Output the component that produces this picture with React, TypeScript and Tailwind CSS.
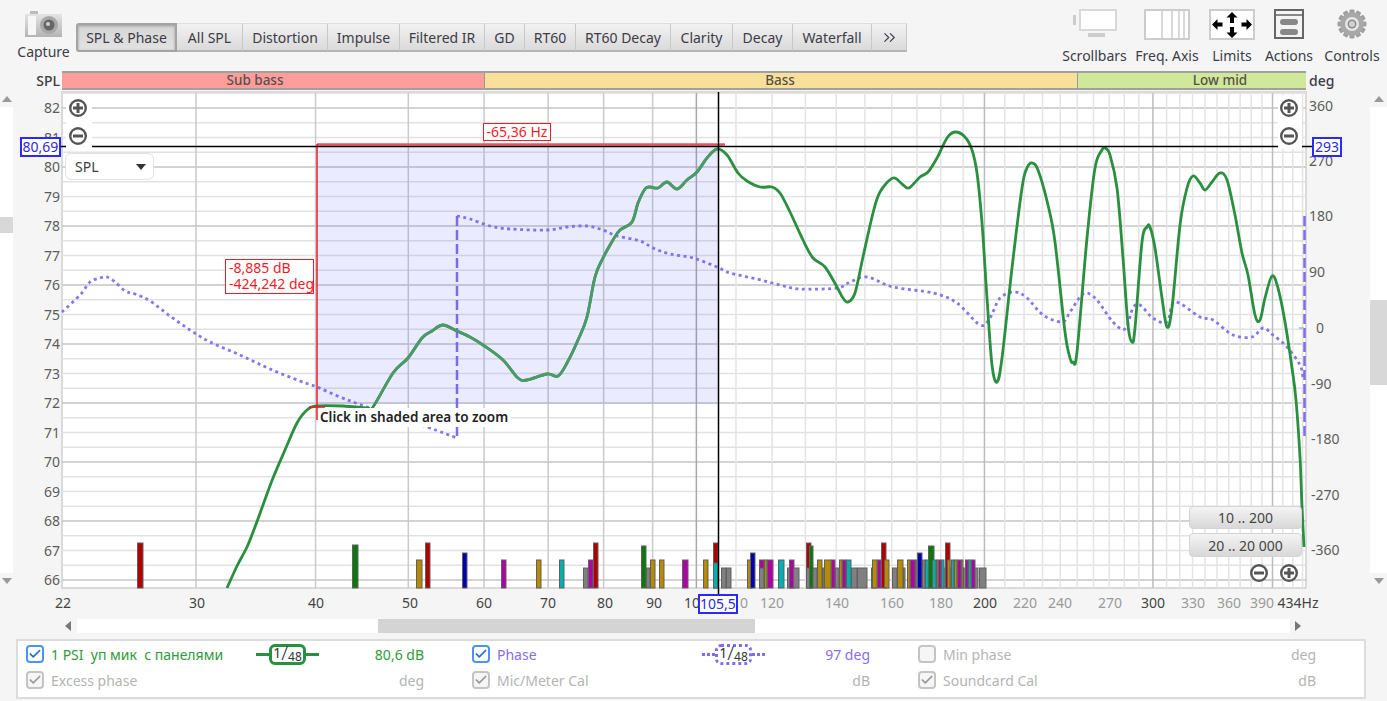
import React from 'react';
import { Check, ChevronsRight } from 'lucide-react';

type Pt = [number, number];

// frequency axis is log, fitted from the tick positions on the screen
const fx = (f: number) => 196 + 415.6 * Math.log(f / 30);
const dbY = (db: number) => 108 + (82 - db) * 29.5;

const splCurve: Pt[] = [
  [227, 588], [237, 566], [247, 547], [255, 527], [263, 505], [273, 478], [285, 450], [297, 423], [307, 410], [317, 406],
  [343, 406], [367, 408], [373, 407], [393, 373], [408, 358], [422, 338], [432, 331], [443, 325], [457, 331], [470, 337],
  [483, 345], [503, 360], [518, 378], [527, 380], [547, 374], [558, 376], [567, 363], [578, 340], [587, 317], [595, 277],
  [603, 258], [613, 240], [620, 230], [632, 222], [638, 203], [645, 189], [650, 187], [658, 188], [667, 182], [677, 189],
  [687, 180], [697, 172], [707, 158], [717, 149], [727, 155], [738, 173], [747, 181], [760, 187], [772, 187], [780, 193],
  [790, 212], [803, 240], [813, 258], [825, 267], [837, 287], [843, 298], [848, 302], [855, 293], [863, 257], [873, 213],
  [880, 192], [893, 178], [902, 184], [909, 188], [920, 177], [928, 172], [937, 158], [947, 138], [955, 132], [965, 137],
  [972, 150], [977, 173], [982, 223], [987, 298], [992, 365], [997, 382], [1002, 358], [1012, 268], [1022, 188], [1027, 168],
  [1032, 163], [1038, 170], [1048, 205], [1055, 242], [1065, 332], [1070, 358], [1073, 362], [1077, 352], [1087, 238], [1095, 168],
  [1102, 150], [1105, 148], [1110, 155], [1117, 188], [1123, 258], [1128, 325], [1132, 342], [1135, 328], [1142, 242], [1147, 227],
  [1150, 227], [1155, 248], [1162, 298], [1167, 327], [1172, 308], [1180, 225], [1187, 188], [1193, 176], [1200, 183], [1205, 190],
  [1212, 182], [1220, 173], [1227, 180], [1235, 215], [1242, 253], [1248, 275], [1255, 315], [1260, 320], [1265, 298], [1272, 276],
  [1278, 288], [1285, 322], [1292, 368], [1296, 400], [1300, 457], [1302, 507], [1304, 547],
];

const phaseA: Pt[] = [
  [62, 312], [80, 295], [90, 282], [100, 278], [107, 277], [115, 282], [125, 291], [135, 294], [150, 301], [170, 316], [190, 330],
  [210, 342], [240, 355], [270, 369], [300, 381], [317, 387], [340, 397], [367, 407], [427, 427], [457, 438],
];

const phaseB: Pt[] = [
  [457, 216], [470, 219], [490, 226], [510, 229], [547, 230], [567, 227], [587, 226], [603, 230], [617, 236], [640, 241], [653, 248],
  [670, 254], [693, 258], [717, 267], [730, 273], [757, 279], [780, 285], [800, 289], [837, 288], [850, 282], [867, 277], [893, 287],
  [933, 293], [957, 303], [980, 325], [990, 318], [1000, 298], [1015, 292], [1027, 298], [1043, 315], [1062, 322], [1070, 312],
  [1080, 297], [1087, 293], [1097, 300], [1113, 322], [1125, 329], [1133, 308], [1140, 305], [1153, 318], [1167, 322], [1175, 302],
  [1200, 317], [1213, 320], [1233, 335], [1252, 337], [1263, 328], [1273, 335], [1287, 347], [1300, 365], [1303, 378],
];

// catmull-rom through the traced points
function smooth(pts: Pt[]) {
  let d = `M${pts[0][0]} ${pts[0][1]}`;
  for (let i = 0; i < pts.length - 1; i++) {
    const p0 = pts[Math.max(i - 1, 0)];
    const p1 = pts[i];
    const p2 = pts[i + 1];
    const p3 = pts[Math.min(i + 2, pts.length - 1)];
    const c1x = p1[0] + (p2[0] - p0[0]) / 6;
    const c1y = p1[1] + (p2[1] - p0[1]) / 6;
    const c2x = p2[0] - (p3[0] - p1[0]) / 6;
    const c2y = p2[1] - (p3[1] - p1[1]) / 6;
    d += ` C${c1x.toFixed(1)} ${c1y.toFixed(1)} ${c2x.toFixed(1)} ${c2y.toFixed(1)} ${p2[0]} ${p2[1]}`;
  }
  return d;
}

const R = '#b00000';
const G = '#0a780a';
const B = '#0000b0';
const O = '#b88a00';
const M = '#b000a8';
const C = '#00b0b0';
const K = '#808080';

const bars: [number, number, number, string][] = [
  [137, 143, 543, R], [352, 358, 545, G], [416, 422, 560, O], [425, 430, 543, R], [462, 467, 553, B], [501, 506, 560, M],
  [536, 541, 560, O], [559, 564, 560, C], [583, 588, 568, K], [588, 593, 560, M], [593, 598, 543, R], [641, 646, 546, G],
  [646, 650, 568, K], [650, 655, 560, O], [659, 664, 560, O], [682, 688, 560, M], [703, 708, 560, O], [713, 718, 543, R],
  [713, 718, 563, C], [721, 726, 568, K], [726, 731, 568, K], [747, 752, 560, O], [750, 755, 553, B], [759, 764, 560, M],
  [759, 764, 568, K], [764, 767, 560, O], [767, 773, 560, M], [778, 784, 560, C], [787, 793, 568, K], [789, 794, 560, M],
  [793, 799, 568, K], [806, 811, 543, R], [806, 817, 568, K], [809, 813, 546, G], [817, 822, 560, O], [822, 824, 568, K],
  [824, 831, 560, O], [831, 835, 560, M], [835, 839, 568, K], [839, 842, 560, O], [842, 846, 560, M], [846, 851, 560, C],
  [851, 857, 568, K], [857, 867, 568, K], [871, 876, 568, K], [872, 877, 560, O], [877, 881, 560, M], [881, 886, 543, R],
  [884, 889, 560, O], [892, 897, 568, K], [897, 903, 560, O], [903, 905, 568, K], [907, 910, 560, O], [910, 915, 560, M],
  [915, 917, 560, K], [917, 922, 553, B], [922, 963, 568, K], [922, 925, 560, K], [925, 929, 560, C], [928, 934, 546, G],
  [932, 936, 560, C], [936, 938, 560, O], [938, 941, 560, M], [941, 944, 560, C], [945, 950, 543, R], [947, 950, 560, O],
  [951, 954, 560, C], [954, 957, 560, O], [957, 961, 560, M], [961, 963, 560, O], [963, 978, 568, K], [965, 968, 560, M],
  [968, 971, 560, C], [971, 975, 560, M], [979, 986, 568, K],
];

const minorDb = Array.from({ length: 34 }, (_, i) => 82.5 - i * 0.5);

const xLabels: [string, number, boolean][] = [
  ['22', 63, true], ['30', 197, true], ['40', 316, true], ['50', 410, true], ['60', 484, true], ['70', 548, true], ['80', 605, true],
  ['90', 654, true], ['100', 696, true], ['110', 736, false], ['120', 772, false], ['140', 837, false], ['160', 892, false],
  ['180', 941, false], ['200', 985, true], ['220', 1025, false], ['240', 1060, false], ['270', 1110, false], ['300', 1153, true],
  ['330', 1193, false], ['360', 1229, false], ['390', 1262, false], ['434Hz', 1298, true],
];

const degLabels: [string, number][] = [
  ['360', 106], ['270', 161], ['180', 216], ['90', 272], ['0', 328], ['-90', 384], ['-180', 439], ['-270', 495], ['-360', 550],
];

const tabs: { label: React.ReactNode; cls: string; active?: boolean }[] = [
  { label: 'SPL & Phase', cls: 'w-[101px]', active: true },
  { label: 'All SPL', cls: 'w-[66px]' },
  { label: 'Distortion', cls: 'w-[85px]' },
  { label: 'Impulse', cls: 'w-[72px]' },
  { label: 'Filtered IR', cls: 'w-[85px]' },
  { label: 'GD', cls: 'w-[40px]' },
  { label: 'RT60', cls: 'w-[51px]' },
  { label: 'RT60 Decay', cls: 'w-[95px]' },
  { label: 'Clarity', cls: 'w-[62px]' },
  { label: 'Decay', cls: 'w-[60px]' },
  { label: 'Waterfall', cls: 'w-[79px]' },
  { label: <ChevronsRight size={19} strokeWidth={1.4} />, cls: 'w-[35px]' },
];

function ZoomBtn({ x, y, plus }: { x: number; y: number; plus?: boolean }) {
  return (
    <g>
      <circle cx={x} cy={y} r={7.8} fill="white" stroke="#555" strokeWidth={2.4} />
      <rect x={x - 5} y={y - 1.5} width={10} height={3} fill="#555" />
      {plus && <rect x={x - 1.5} y={y - 5} width={3} height={10} fill="#555" />}
    </g>
  );
}

function CameraIcon() {
  return (
    <svg width="40" height="28" viewBox="0 0 40 28" className="mt-[10px]">
      <defs>
        <linearGradient id="cam" x1="0" y1="0" x2="0" y2="1">
          <stop offset="0" stopColor="#e4e4e4" />
          <stop offset="1" stopColor="#b4b4b4" />
        </linearGradient>
      </defs>
      <rect x="6" y="1" width="8" height="4" fill="#bbb" />
      <rect x="1" y="4" width="37" height="23" fill="url(#cam)" />
      <rect x="4" y="6" width="8" height="19" fill="#f6f6f6" />
      <circle cx="25" cy="15" r="9" fill="#a8a8a8" />
      <circle cx="25" cy="15" r="5.5" fill="#666" />
      <circle cx="24" cy="14" r="2" fill="#cfcfd8" />
    </svg>
  );
}

function ScrollbarsIcon() {
  return (
    <svg width="44" height="30" viewBox="0 0 44 30">
      <rect x="7" y="1" width="36" height="20" fill="#fff" stroke="#d8d8d8" strokeWidth="2" />
      <rect x="0" y="6" width="3" height="10" fill="#ccc" />
      <rect x="15" y="24" width="17" height="4" fill="#ccc" />
    </svg>
  );
}

function FreqIcon() {
  return (
    <svg width="46" height="31" viewBox="0 0 46 31">
      <rect x="1" y="1" width="44" height="29" fill="#fff" stroke="#ccc" strokeWidth="2" />
      {[18, 28, 35, 40].map((x) => (
        <line key={x} x1={x} y1="1" x2={x} y2="30" stroke="#ccc" strokeWidth="1.5" />
      ))}
    </svg>
  );
}

function LimitsIcon() {
  return (
    <svg width="46" height="31" viewBox="0 0 46 31">
      <rect x="1" y="1" width="44" height="29" fill="#fff" stroke="#ccc" strokeWidth="2" />
      <path d="M23 3l-5.500 5.500h3.500v5.500h4v-5.500h3.500zM23 29l-5.500-5.500h3.500v-5.500h4v5.500h3.500zM3 15.500l5.500-5.500v3.500h5v4h-5v3.500zM43 15.500l-5.500-5.500v3.500h-5v4h5v3.500z" fill="#000" />
    </svg>
  );
}

function ActionsIcon() {
  return (
    <svg width="30" height="30" viewBox="0 0 30 30">
      <rect x="1" y="1" width="28" height="28" fill="#f4f4f4" stroke="#666" strokeWidth="2" />
      <line x1="1" y1="6" x2="29" y2="6" stroke="#666" strokeWidth="1.5" />
      <rect x="6" y="10" width="18" height="6" rx="3" fill="#888" />
      <rect x="6" y="20" width="18" height="6" rx="3" fill="#888" />
    </svg>
  );
}

function GearIcon() {
  const teeth = Array.from({ length: 12 }, (_, i) => i * 30);
  return (
    <svg width="30" height="30" viewBox="0 0 30 30">
      {teeth.map((a) => (
        <rect key={a} x="12.500" y="0.500" width="5" height="6" rx="1" fill="#a0a0a0" transform={`rotate(${a} 15 15)`} />
      ))}
      <circle cx="15" cy="15" r="11.500" fill="#a8a8a8" />
      <circle cx="15" cy="15" r="7" fill="#e8e8e8" />
      <circle cx="15" cy="15" r="4.500" fill="#8c8c8c" />
      <circle cx="15" cy="15" r="3" fill="#d0d0d0" />
    </svg>
  );
}

const tools = [
  { label: 'Scrollbars', cls: 'w-[73px]', icon: <ScrollbarsIcon /> },
  { label: 'Freq. Axis', cls: 'w-[72px]', icon: <FreqIcon /> },
  { label: 'Limits', cls: 'w-[58px]', icon: <LimitsIcon /> },
  { label: 'Actions', cls: 'w-[56px]', icon: <ActionsIcon /> },
  { label: 'Controls', cls: 'w-[70px]', icon: <GearIcon /> },
];

function CheckBox({ state }: { state: 'on' | 'dim' | 'off' }) {
  if (state === 'on') {
    return (
      <span className="w-[18px] h-[18px] rounded-[4px] border-2 border-[#4a94f0] bg-white flex items-center justify-center">
        <Check size={14} strokeWidth={3} color="#1d6fd8" />
      </span>
    );
  }
  return (
    <span className="w-[18px] h-[18px] rounded-[4px] border-2 border-[#c4c4c4] bg-[#f6f6f6] flex items-center justify-center">
      {state === 'dim' && <Check size={14} strokeWidth={3} color="#999" />}
    </span>
  );
}

function Smoothing({ dotted }: { dotted?: boolean }) {
  const lineCls = dotted
    ? 'w-[13px] border-t-[3px] border-dotted border-[#7f6cf0]'
    : 'w-[13px] border-t-[3px] border-[#2a8f3e]';
  const boxCls = dotted
    ? 'border-[3px] border-dotted border-[#7f6cf0] rounded-[6px]'
    : 'border-[3px] border-[#2a8f3e] rounded-[6px]';
  return (
    <div className="flex items-center">
      <span className={lineCls} />
      <span className={`${boxCls} w-[37px] h-[21px] flex items-center justify-center text-[#333] leading-none`}>
        <span className="text-[14px] -translate-y-[1px]">1</span>
        <span className="text-[20px] font-light -translate-y-[1px]">/</span>
        <span className="text-[12px] translate-y-[3px]">48</span>
      </span>
      <span className={lineCls} />
    </div>
  );
}

function LegendCell({
  state,
  label,
  value,
  color,
  smoothing,
}: {
  state: 'on' | 'dim' | 'off';
  label: string;
  value: string;
  color: string;
  smoothing?: React.ReactNode;
}) {
  return (
    <div className={`w-[446px] h-[26px] grid grid-cols-[25px_205px_63px_105px] items-center ${color}`}>
      <CheckBox state={state} />
      <span className="whitespace-pre">{label}</span>
      <span>{smoothing}</span>
      <span className="text-right">{value}</span>
    </div>
  );
}

function Plot() {
  const hz: number[] = [];
  for (let f = 110; f <= 430; f += 10) hz.push(f);
  const splPath = smooth(splCurve);
  return (
    <svg width="1357" height="529" viewBox="13 90 1357 529" className="block">
      <defs>
        <clipPath id="shade">
          <rect x="317" y="146" width="401" height="258" />
        </clipPath>
      </defs>
      <rect x="62" y="92" width="1244" height="496" fill="#fff" stroke="#d0d0d0" strokeWidth="1.500" />

      {/* grid */}
      {minorDb.map((db) => (
        <line key={db} x1="62" x2="1306" y1={dbY(db)} y2={dbY(db)} stroke={db % 2 === 0 ? '#c4c4c4' : '#e2e2e2'} strokeWidth={1.5} />
      ))}
      {hz.map((f) => (
        <line key={f} x1={fx(f)} x2={fx(f)} y1="93" y2="588" stroke={f === 200 || f === 300 || f === 400 ? '#bcbcbc' : '#e4e4e4'} strokeWidth={1.5} />
      ))}
      {[30, 40, 50, 60, 70, 80, 90].map((f) => (
        <line key={f} x1={fx(f)} x2={fx(f)} y1="93" y2="588" stroke="#cacaca" strokeWidth={1.5} />
      ))}
      <line x1={fx(100)} x2={fx(100)} y1="93" y2="588" stroke="#a8a8a8" strokeWidth={1.5} />

      {/* distortion / marker bars */}
      {bars.map(([a, b, top, c], i) => (
        <rect key={i} x={a + 0.5} y={top} width={b - a - 0.5} height={588 - top} fill={c} stroke="#606060" strokeWidth={1} />
      ))}

      {/* curves */}
      <path d={smooth(phaseA)} fill="none" stroke="#8577ee" strokeWidth={2.8} strokeDasharray="3 3.500" />
      <path d={smooth(phaseB)} fill="none" stroke="#8577ee" strokeWidth={2.8} strokeDasharray="3 3.500" />
      <line x1="457" x2="457" y1="216" y2="438" stroke="#7f6cf0" strokeWidth={2.5} strokeDasharray="10 4" />
      <line x1="1304.500" x2="1304.500" y1="216" y2="438" stroke="#7f6cf0" strokeWidth={2.5} strokeDasharray="10 4" />
      <line x1="1299" x2="1304" y1="328" y2="328" stroke="#8fb8f0" strokeWidth={1.5} />
      <path d={splPath} fill="none" stroke="#2a8f3e" strokeWidth={2.8} />

      {/* measure shading */}
      <rect x="317" y="146" width="401" height="258" fill="#5a5aff" fillOpacity={0.12} />
      <path d={splPath} fill="none" stroke="#4c9a68" strokeWidth={2.8} clipPath="url(#shade)" />
      <line x1="317" x2="725" y1="144.500" y2="144.500" stroke="#f2505f" strokeWidth={2.5} />
      <line x1="317" x2="317" y1="144" y2="420" stroke="#ec1c24" strokeWidth={1.5} />
      <line x1="309" x2="325" y1="407" y2="407" stroke="#ec1c24" strokeWidth={1.5} />

      {/* cursor */}
      <line x1="718.500" x2="718.500" y1="92" y2="594" stroke="#000" strokeWidth={1.5} />
      <line x1="60" x2="1312" y1="146.500" y2="146.500" stroke="#000" strokeWidth={1.5} />

      {/* white patches behind the zoom buttons */}
      <rect x="66" y="95" width="26" height="54" fill="#fff" />
      <rect x="1278" y="95" width="24" height="54" fill="#fff" />
      <ZoomBtn x={78} y={108} plus />
      <ZoomBtn x={78} y={136} />
      <ZoomBtn x={1289} y={108} plus />
      <ZoomBtn x={1289} y={136} />
      <ZoomBtn x={1259} y={573} />
      <ZoomBtn x={1289} y={573} plus />

      {/* axis labels */}
      {Array.from({ length: 17 }, (_, i) => 82 - i).map((db) => (
        <text key={db} x="60" y={dbY(db) + 5} textAnchor="end" fontSize="14" fill="#5c5c5c">
          {db}
        </text>
      ))}
      {degLabels.map(([t, y]) => (
        <text key={t} x={t.startsWith('-') ? 1311 : t === '0' ? 1316 : 1309} y={y + 5} fontSize="14" fill="#5c5c5c">
          {t}
        </text>
      ))}
      {xLabels.map(([t, x, major]) => (
        <text key={t} x={x} y="608" textAnchor="middle" fontSize="14" fill={major ? '#444' : '#9a9a9a'}>
          {t}
        </text>
      ))}
    </svg>
  );
}

export default function App() {
  return (
    <div className="w-[1387px] h-[701px] overflow-hidden bg-[#f5f5f5] flex flex-col font-['Noto_Sans','Liberation_Sans',sans-serif] text-[14px] text-[#3c3c46]">
      {/* toolbar */}
      <div className="h-[71px] flex shrink-0">
        <div className="w-[76px] pl-[11px] flex flex-col items-center">
          <CameraIcon />
          <span className="mt-[4px] leading-[20px]">Capture</span>
        </div>
        <div className="mt-[23px] h-[29px] flex">
          {tabs.map((t, i) => (
            <div
              key={i}
              className={
                t.active
                  ? `${t.cls} flex items-center justify-center rounded-l-[3px] border-2 border-[#a4a4a4] bg-gradient-to-b from-[#d6d6d6] to-[#e2e2e2] shadow-[inset_0_1px_3px_#9a9a9a]`
                  : `${t.cls} flex items-center justify-center border-r border-r-[#c8c8c8] border-b-2 border-b-[#b4b4b4] border-t border-t-[#e0e0e0] bg-gradient-to-b from-[#f2f2f2] to-[#dadada]`
              }
            >
              {t.label}
            </div>
          ))}
        </div>
        <div className="ml-auto flex">
          {tools.map((t) => (
            <div key={t.label} className={`${t.cls} flex flex-col items-center`}>
              <div className="h-[46px] pt-[9px]">{t.icon}</div>
              <span className="leading-[20px]">{t.label}</span>
            </div>
          ))}
        </div>
      </div>

      {/* band row */}
      <div className="h-[19px] flex shrink-0 font-medium">
        <div className="w-[60px] text-right leading-[19px]">SPL</div>
        <div className="ml-[2px] w-[1244px] flex border-y-2 border-y-[#a0a0a0] text-[#5a5048] leading-[15px] text-[13.500px]">
          <div className="w-[423px] bg-[#ff9c9c] text-center border-r border-r-[#999] pr-[36px]">Sub bass</div>
          <div className="w-[593px] bg-[#f8e09a] text-center border-r border-r-[#999] pr-[2px]">Bass</div>
          <div className="w-[228px] bg-[#cfe89a] text-center pl-[56px]">Low mid</div>
        </div>
        <div className="ml-[3px] leading-[19px]">deg</div>
      </div>

      {/* chart with vertical scrollbars */}
      <div className="h-[529px] flex shrink-0">
        <div className="w-[13px] flex flex-col items-center pt-[6px]">
          <span className="w-0 h-0 border-x-[5px] border-x-transparent border-b-[6px] border-b-[#999]" />
          <div className="w-[13px] h-[466px] mt-[5px] bg-white pt-[110px]">
            <div className="h-[16px] bg-[#d8d8d8]" />
          </div>
          <span className="w-0 h-0 mt-[5px] border-x-[5px] border-x-transparent border-t-[6px] border-t-[#999]" />
        </div>

        <div className="relative w-[1357px]">
          <Plot />

          {/* labels that sit over the plot; left = page x - 13, top = page y - 90 */}
          <div className="absolute left-[7px] top-[47px] w-[41px] h-[20px] border-2 border-[#2a2aff] bg-white text-[#2a2ae0] leading-[16px] text-center">80,69</div>
          <div className="absolute left-[1299px] top-[47px] w-[30px] h-[20px] border-2 border-[#2a2aff] bg-white text-[#2a2ae0] leading-[16px] text-center">293</div>
          <div className="absolute left-[685px] top-[504px] w-[40px] h-[20px] border-2 border-[#2a2aff] bg-white text-[#2a2ae0] leading-[16px] text-center">105,5</div>

          <div className="absolute left-[52px] top-[63px] w-[89px] h-[27px] rounded-[6px] border border-[#e2e2e2] bg-white flex items-center justify-between pl-[9px] pr-[7px]">
            <span>SPL</span>
            <span className="w-0 h-0 border-x-[5px] border-x-transparent border-t-[6px] border-t-[#333]" />
          </div>

          <div className="absolute left-[470px] top-[33px] w-[68px] h-[18px] border-[1.500px] border-[#f01c28] bg-white text-[#f01c28] leading-[15px] text-center whitespace-nowrap">-65,36 Hz</div>
          <div className="absolute left-[212px] top-[169px] w-[89px] h-[35px] border-[1.500px] border-[#f01c28] bg-white text-[#f01c28] leading-[16px] pl-[3px] whitespace-nowrap">
            <div>-8,885 dB</div>
            <div>-424,242 deg</div>
          </div>

          <div className="absolute left-[305px] top-[318px] w-[193px] h-[19px] bg-white pl-[2px] leading-[19px] text-[13.500px] font-semibold text-[#222] whitespace-nowrap">Click in shaded area to zoom</div>

          <div className="absolute left-[1176px] top-[416px] w-[113px] flex flex-col gap-[4px] text-[#444]">
            <div className="h-[23px] rounded-[4px] border border-[#d4d4d4] bg-gradient-to-b from-[#f4f4f4] to-[#d8d8d8] flex items-center justify-center">10 .. 200</div>
            <div className="h-[24px] rounded-[4px] border border-[#d4d4d4] bg-gradient-to-b from-[#f4f4f4] to-[#d8d8d8] flex items-center justify-center">20 .. 20 000</div>
          </div>
        </div>

        <div className="flex-1 flex flex-col items-center pt-[6px]">
          <span className="w-0 h-0 border-x-[5px] border-x-transparent border-b-[6px] border-b-[#999]" />
          <div className="w-full h-[466px] mt-[5px] bg-white pt-[193px]">
            <div className="h-[85px] bg-[#d8d8d8]" />
          </div>
          <span className="w-0 h-0 mt-[5px] border-x-[5px] border-x-transparent border-t-[6px] border-t-[#999]" />
        </div>
      </div>

      {/* horizontal scrollbar */}
      <div className="h-[14px] shrink-0 flex items-center pl-[65px]">
        <span className="w-0 h-0 border-y-[5px] border-y-transparent border-r-[6px] border-r-[#777]" />
        <div className="ml-[6px] w-[1213px] h-[14px] bg-white pl-[301px]">
          <div className="w-[377px] h-[14px] bg-[#d4d4d4]" />
        </div>
        <span className="ml-[5px] w-0 h-0 border-y-[5px] border-y-transparent border-l-[6px] border-l-[#777]" />
      </div>

      {/* legend */}
      <div className="mt-[6px] ml-[16px] w-[1350px] h-[60px] border-2 border-[#dcdcdc] bg-white pl-[8px]">
        <div className="flex">
          <LegendCell state="on" label="1 PSI  уп мик  с панелями" value="80,6 dB" color="text-[#2f9a3c]" smoothing={<Smoothing />} />
          <LegendCell state="on" label="Phase" value="97 deg" color="text-[#8a6cf0]" smoothing={<Smoothing dotted />} />
          <LegendCell state="off" label="Min phase" value="deg" color="text-[#b4b4b4]" />
        </div>
        <div className="flex">
          <LegendCell state="dim" label="Excess phase" value="deg" color="text-[#b4b4b4]" />
          <LegendCell state="dim" label="Mic/Meter Cal" value="dB" color="text-[#b4b4b4]" />
          <LegendCell state="dim" label="Soundcard Cal" value="dB" color="text-[#b4b4b4]" />
        </div>
      </div>
    </div>
  );
}
